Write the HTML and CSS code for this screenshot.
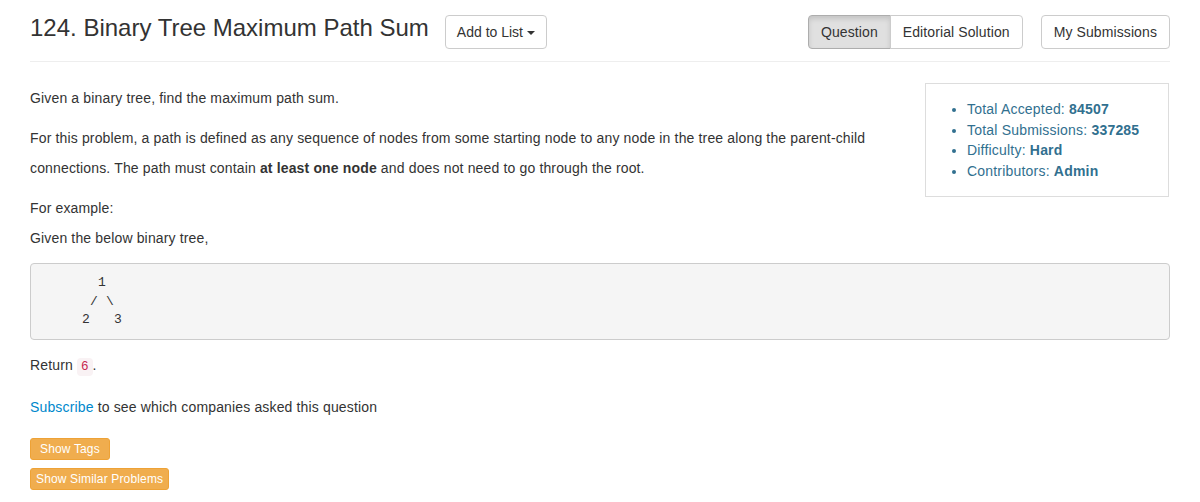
FILE: index.html
```html
<!DOCTYPE html>
<html>
<head>
<meta charset="utf-8">
<title>124. Binary Tree Maximum Path Sum</title>
<link rel="stylesheet" href="styles.css">
</head>
<body>
<div class="container">
  <div class="header">
    <h3 class="title">124. Binary Tree Maximum Path Sum</h3>
    <button class="btn add-list">Add to List <span class="caret"></span></button>
    <div class="btn-group">
      <button class="btn active">Question</button>
      <button class="btn">Editorial Solution</button>
    </div>
    <button class="btn">My Submissions</button>
  </div>
  <hr class="divider">
  <div class="question">
    <div class="stats">
      <ul>
        <li>Total Accepted: <strong>84507</strong></li>
        <li>Total Submissions: <strong>337285</strong></li>
        <li>Difficulty: <strong>Hard</strong></li>
        <li>Contributors: <strong>Admin</strong></li>
      </ul>
    </div>
    <div class="description">
      <p>Given a binary tree, find the maximum path sum.</p>
      <p>For this problem, a path is defined as any sequence of nodes from some starting node to any node in the tree along the parent-child connections. The path must contain <b>at least one node</b> and does not need to go through the root.</p>
      <p>For example:<br>Given the below binary tree,</p>
<pre>       1
      / \
     2   3</pre>
      <p>Return <code>6</code>.</p>
    </div>
    <div class="subscribe"><a href="#">Subscribe</a> to see which companies asked this question</div>
    <div class="tag-buttons">
      <button class="btn-warn tags">Show Tags</button>
      <button class="btn-warn similar">Show Similar Problems</button>
    </div>
  </div>
</div>
</body>
</html>
```
FILE: styles.css
```css
* { box-sizing: border-box; }
html, body { margin: 0; padding: 0; background: #fff; }
body {
  font-family: "Liberation Sans", Arial, sans-serif;
  font-size: 14px;
  line-height: 1.42857;
  color: #333;
  letter-spacing: 0.15px;
}
.container {
  width: 1170px;
  margin: 0 auto;
  padding: 0 15px;
}
.header {
  display: flex;
  align-items: flex-start;
  padding-top: 15px;
}
.title {
  font-size: 24px;
  font-weight: 400;
  line-height: 1.1;
  margin: 0 16px 0 0;
  color: #333;
  letter-spacing: 0;
}
.btn {
  display: inline-block;
  font-family: "Liberation Sans", Arial, sans-serif;
  font-size: 14px;
  line-height: 20px;
  padding: 6px 12px;
  color: #333;
  background: #fff;
  border: 1px solid #ccc;
  border-radius: 4px;
  cursor: pointer;
  white-space: nowrap;
  letter-spacing: 0.1px;
}
.add-list { padding: 6px 11px; letter-spacing: 0; }
.caret {
  display: inline-block;
  width: 0;
  height: 0;
  vertical-align: middle;
  border-top: 4px solid #333;
  border-left: 4px solid transparent;
  border-right: 4px solid transparent;
}
.btn-group {
  display: flex;
  margin-left: auto;
  margin-right: 18px;
}
.btn-group .btn:first-child {
  border-top-right-radius: 0;
  border-bottom-right-radius: 0;
}
.btn-group .btn:last-child {
  border-top-left-radius: 0;
  border-bottom-left-radius: 0;
  margin-left: -1px;
}
.btn.active {
  background: #e0e0e0;
  border-color: #adadad;
  box-shadow: inset 0 3px 5px rgba(0,0,0,0.125);
}
.divider {
  border: 0;
  border-top: 1px solid #eee;
  margin: 12px 0 21px;
}
.stats {
  float: right;
  width: 244px;
  margin-left: 40px;
  border: 1px solid #ddd;
  padding: 15px;
  margin-right: 1px;
}
.stats ul {
  margin: 0;
  padding-left: 26px;
  color: #31708f;
  letter-spacing: 0.2px;
}
.stats li { line-height: 20.6px; }
.description p {
  margin: 0 0 10px;
  line-height: 30px;
}
pre {
  display: block;
  margin: 0 0 10px;
  padding: 10px 10px 9.5px 11px;
  font-family: "Liberation Mono", "Courier New", monospace;
  font-size: 13px;
  line-height: 1.42857;
  letter-spacing: 0.2px;
  color: #333;
  background: #f5f5f5;
  border: 1px solid #ccc;
  border-radius: 4px;
  overflow: auto;
}
code {
  font-family: "Liberation Mono", "Courier New", monospace;
  font-size: 90%;
  padding: 2px 4px;
  color: #c7254e;
  background: #f9f2f4;
  border-radius: 4px;
  letter-spacing: 0;
}
.subscribe {
  margin-top: 15px;
  line-height: 20px;
}
.subscribe a {
  color: #0088cc;
  text-decoration: none;
}
.tag-buttons {
  margin-top: 21px;
  display: flex;
  flex-direction: column;
  align-items: flex-start;
  gap: 8px;
}
.btn-warn {
  font-family: "Liberation Sans", Arial, sans-serif;
  font-size: 12px;
  line-height: 18px;
  padding: 1px 5px;
  color: #fff;
  background: #f0ad4e;
  border: 1px solid #eea236;
  border-radius: 3px;
  letter-spacing: 0.15px;
}
.btn-warn.tags { padding: 1px 9px; }
```
